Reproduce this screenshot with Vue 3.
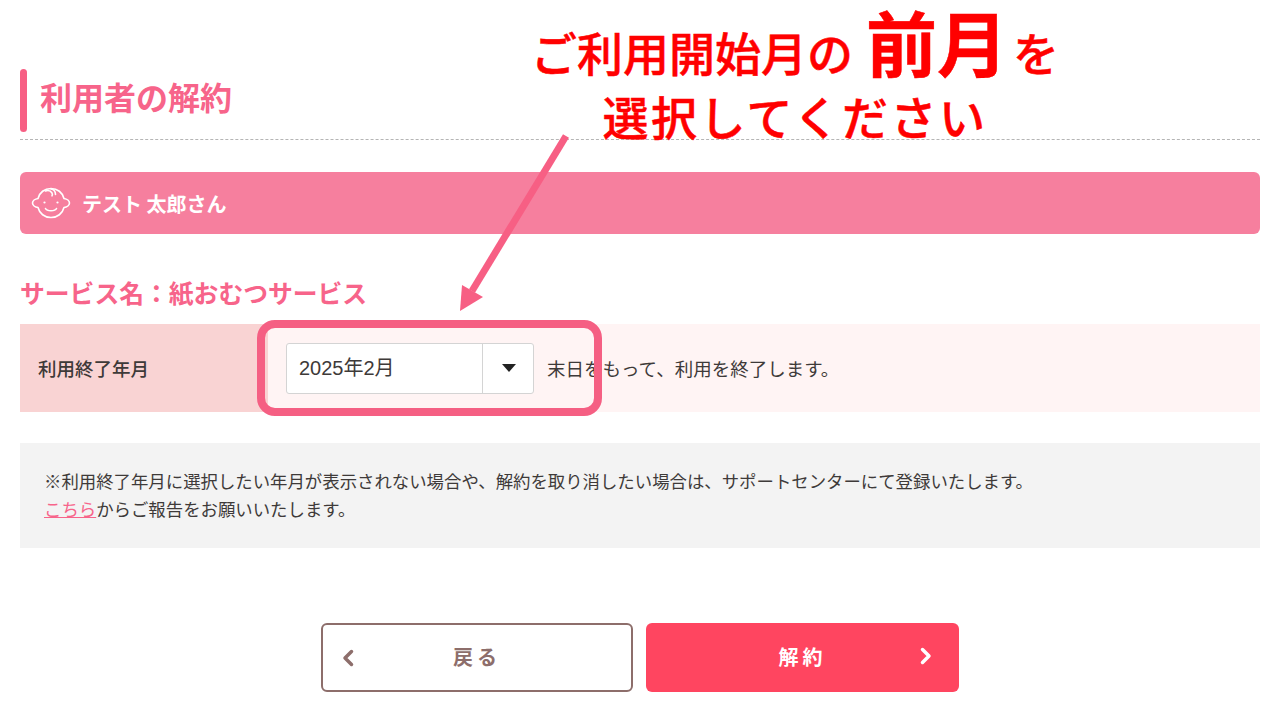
<script setup>
const service = '紙おむつサービス'
</script>

<template>
  <div class="page">
    <h1 class="title">利用者の解約</h1>

    <div class="user-band">
      <svg class="baby" viewBox="0 0 40 32" fill="none" stroke="#fff" stroke-width="1.600" stroke-linecap="round" stroke-linejoin="round">
        <path d="M7 11.500C8.500 5.500 13.500 1.500 20 1.500s11.500 4 13 10c3 .5 5.500 2.500 5.500 4.500s-2.500 4-5.500 4.500c-1.500 6-6.500 10-13 10s-11.500-4-13-10c-3-.5-5.500-2.500-5.500-4.500s2.500-4 5.500-4.500Z" />
        <path d="M14.500 4c2.500-1 5-.5 6.500 2 .5 1 .5 2 0 2.800M20 2c2.500.5 4.500 2.500 4.500 5.500" />
        <path d="M14.500 21.500c1.500 3 9.500 3 11 0" />
        <circle cx="13.500" cy="15.500" r="1.100" fill="#fff" stroke="none" />
        <circle cx="26.500" cy="15.500" r="1.100" fill="#fff" stroke="none" />
      </svg>
      <span>テスト 太郎さん</span>
    </div>

    <h2 class="service">サービス名：{{ service }}</h2>

    <div class="end-row">
      <div class="end-label">利用終了年月</div>
      <div class="end-body">
        <div class="select">
          <span class="select-value">2025年2月</span>
          <span class="select-btn"><i class="caret"></i></span>
        </div>
        <span>末日をもって、利用を終了します。</span>
      </div>
    </div>

    <div class="notice">
      ※利用終了年月に選択したい年月が表示されない場合や、解約を取り消したい場合は、サポートセンターにて登録いたします。<br />
      <a class="notice-link">こちら</a>からご報告をお願いいたします。
    </div>

    <div class="actions">
      <button class="btn btn-back">
        <svg class="chev chev-left" viewBox="0 0 12 18" fill="none" stroke="#8d6e6b" stroke-width="3.500" stroke-linecap="round" stroke-linejoin="round"><path d="M9.500 2.500 3 9l6.500 6.500" /></svg>
        戻る
      </button>
      <button class="btn btn-go">
        解約
        <svg class="chev chev-right" viewBox="0 0 12 18" fill="none" stroke="#fff" stroke-width="3.500" stroke-linecap="round" stroke-linejoin="round"><path d="M2.500 2.500 9 9l-6.500 6.500" /></svg>
      </button>
    </div>

    <!-- slide annotation laid over the form -->
    <div class="callout">
      <div class="callout-line">ご利用開始月の<span class="callout-big">前月</span><span class="callout-wo">を</span></div>
      <div class="callout-line callout-second">選択してください</div>
    </div>
    <svg class="arrow" width="1280" height="720" viewBox="0 0 1280 720">
      <path d="M566 136 L472 291" stroke="#f75f84" stroke-width="7" fill="none" />
      <path d="M460 311 L462 285 L483 297 Z" fill="#f75f84" />
    </svg>
    <div class="highlight"></div>
  </div>
</template>

<style scoped>
.page {
  position: relative;
  width: 1280px;
  height: 720px;
  box-sizing: border-box;
  padding: 69px 20px 0;
  overflow: hidden;
  background: #fff;
  color: #3e3a39;
  font-family: "Noto Sans CJK JP", "Noto Sans", sans-serif;
}
.title {
  position: relative;
  margin: 0;
  height: 71px;
  box-sizing: border-box;
  padding: 4px 0 0 20px;
  border-bottom: 1px dashed #b5b5b5;
  font-size: 32px;
  line-height: 46px;
  font-weight: 700;
  color: #f7648a;
}
.title::before {
  content: "";
  position: absolute;
  left: 0;
  top: 0;
  width: 7px;
  height: 63px;
  border-radius: 4px;
  background: #f75f84;
}
.user-band {
  display: flex;
  align-items: center;
  gap: 11px;
  height: 62px;
  margin-top: 32px;
  padding-left: 11px;
  border-radius: 6px;
  background: #f67f9e;
  color: #fff;
  font-size: 20px;
  font-weight: 700;
}
.baby {
  width: 40px;
  height: 32px;
}
.service {
  margin: 40px 0 0;
  height: 39px;
  font-size: 24.800px;
  line-height: 37px;
  font-weight: 700;
  color: #f7648a;
}
.end-row {
  display: flex;
  height: 88px;
  margin-top: 11px;
  font-size: 18.500px;
}
.end-label {
  display: flex;
  align-items: center;
  width: 248px;
  box-sizing: border-box;
  padding-left: 18px;
  background: #f9d3d3;
  font-weight: 500;
}
.end-body {
  flex: 1;
  display: flex;
  align-items: center;
  gap: 13px;
  padding-left: 18px;
  background: #fff4f4;
}
.select {
  display: flex;
  width: 248px;
  height: 51px;
  box-sizing: border-box;
  border: 1px solid #d4d4d4;
  border-radius: 3px;
  background: #fff;
  font-family: "Liberation Sans", "Noto Sans CJK JP", sans-serif;
  font-size: 20px;
}
.select-value {
  flex: 1;
  padding-left: 12px;
  line-height: 49px;
}
.select-btn {
  display: flex;
  align-items: center;
  justify-content: center;
  width: 50px;
  border-left: 1px solid #d4d4d4;
}
.caret {
  margin-left: 2px;
  border-left: 7.500px solid transparent;
  border-right: 7.500px solid transparent;
  border-top: 8px solid #222;
}
.notice {
  margin-top: 31px;
  height: 105px;
  box-sizing: border-box;
  padding: 24px 24px 0;
  background: #f3f3f3;
  font-size: 17.400px;
  line-height: 28px;
}
.notice-link {
  color: #f7648a;
  text-decoration: underline;
}
.actions {
  display: flex;
  justify-content: center;
  gap: 13px;
  margin-top: 75px;
}
.btn {
  position: relative;
  width: 313px;
  height: 69px;
  box-sizing: border-box;
  padding-bottom: 3px;
  border-radius: 6px;
  font-family: inherit;
  font-size: 20px;
  font-weight: 700;
  letter-spacing: 4px;
}
.btn-back {
  width: 312px;
  border: 2px solid #8d6e6b;
  background: #fff;
  color: #8d6e6b;
}
.btn-go {
  border: 0;
  background: #ff4560;
  color: #fff;
}
.chev {
  position: absolute;
  top: 24px;
  width: 12px;
  height: 18px;
}
.chev-left {
  left: 19px;
}
.chev-right {
  right: 27px;
}
.callout {
  position: absolute;
  left: 400px;
  top: 0;
  width: 790px;
  color: #f00;
  text-align: center;
  font-weight: 500;
  font-size: 46px;
  -webkit-text-stroke: 0.5px #f00;
}
.callout-line {
  height: 60px;
  line-height: 60px;
}
.callout-line:first-child {
  margin-top: 12px;
}
.callout-second {
  margin-top: 13px;
  height: 60px;
  letter-spacing: 2.500px;
}
.callout-big {
  display: inline-block;
  margin: 0 5px 0 13px;
  font-size: 71px;
  line-height: 0.8;
  font-weight: 700;
}
.arrow {
  position: absolute;
  left: 0;
  top: 0;
  pointer-events: none;
}
.highlight {
  position: absolute;
  left: 257px;
  top: 320px;
  width: 345px;
  height: 96px;
  box-sizing: border-box;
  border: 8px solid #f55f83;
  border-radius: 18px;
}
</style>
